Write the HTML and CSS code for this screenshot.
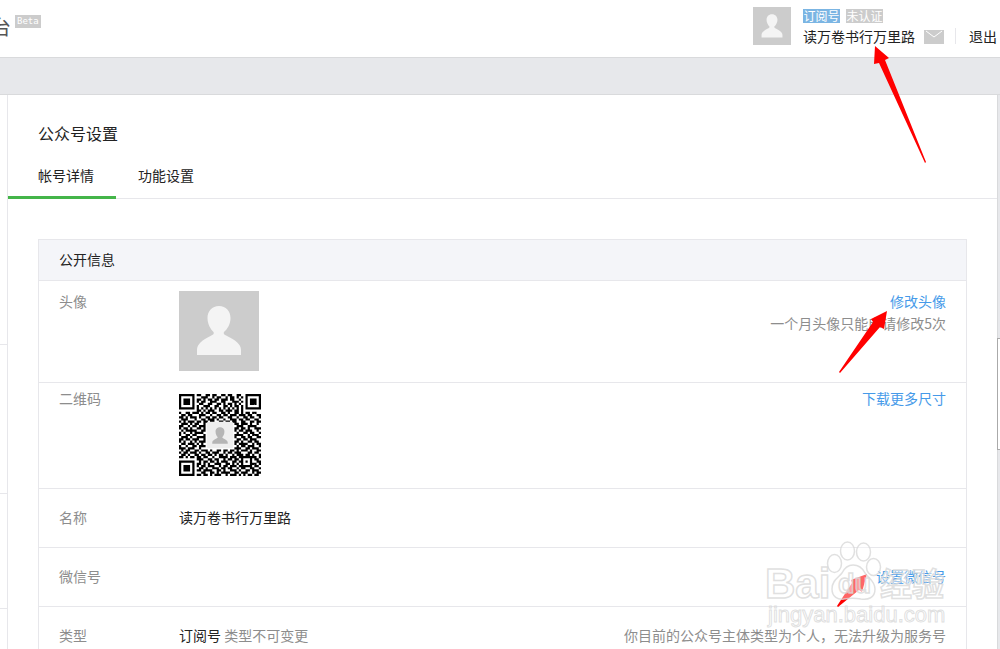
FILE: index.html
```html
<!DOCTYPE html>
<html lang="zh-CN">
<head>
<meta charset="utf-8">
<title>公众号设置</title>
<link rel="stylesheet" href="styles.css">
</head>
<body>
<svg class="defs" width="0" height="0" aria-hidden="true">
  <symbol id="person" viewBox="0 0 80 80">
    <rect width="80" height="80" fill="#ccc"/>
    <path fill="#f4f4f4" d="M40 15c-7 0-11.500 5-11.500 12 0 6 3 11 6 14 1 2-1 3-3 4-8 4-13.500 8-13.500 14v5h44v-5c0-6-6-10-14-14-2-1-4-2-3-4 3.500-3 6.500-8 6.500-14 0-7-4.500-12-11.500-12z"/>
  </symbol>
</svg>
<div class="page">
  <header class="topbar">
    <div class="brand"><span class="brand-name">台</span><span class="beta">Beta</span></div>
    <div class="account">
      <svg class="account-avatar" role="img" aria-label="头像"><use href="#person"/></svg>
      <div class="account-info">
        <div class="badges"><span class="badge badge-blue">订阅号</span><span class="badge">未认证</span></div>
        <div class="account-line">
          <a class="plain" href="#">读万卷书行万里路</a>
          <a class="mail" href="#" aria-label="消息"><svg viewBox="0 0 20 14"><rect width="20" height="14" fill="#ccc"/><path d="M2 1l8 6 8-6" fill="none" stroke="#fff" stroke-width="1"/></svg></a>
          <a class="plain logout" href="#">退出</a>
        </div>
      </div>
    </div>
  </header>
  <div class="band"></div>
  <div class="body">
    <nav class="side" aria-label="菜单"><div class="side-a"></div><div class="side-b"></div><div class="side-c"></div></nav>
    <main class="main">
      <h1 class="title">公众号设置</h1>
      <nav class="tabs"><a class="tab tab-active" href="#">帐号详情</a><a class="tab" href="#">功能设置</a></nav>
      <section class="panel">
        <h2 class="panel-title">公开信息</h2>
        <div class="row row-avatar">
          <div class="label">头像</div>
          <div class="value"><svg class="avatar" role="img" aria-label="头像"><use href="#person"/></svg></div>
          <div class="action"><a href="#">修改头像</a><p>一个月头像只能申请修改5次</p></div>
        </div>
        <div class="row row-qr">
          <div class="label">二维码</div>
          <div class="value"><svg class="qr" viewBox="0 0 37 37" role="img" aria-label="二维码"><path id="modules"/><rect x="12.500" y="12.500" width="12" height="12" rx="1" fill="#eee"/><path fill="#b5b5b5" d="M18.500 15c-1.500 0-2 1-2 2 0 1.200.5 2 1 2.500-.5 1-2.500 1-2.500 2.500v.5h7V22c0-1.500-2-1.500-2.500-2.500.5-.5 1-1.300 1-2.500 0-1-.5-2-2-2z"/></svg></div>
          <div class="action"><a href="#">下载更多尺寸</a></div>
        </div>
        <div class="row">
          <div class="label">名称</div>
          <div class="value">读万卷书行万里路</div>
        </div>
        <div class="row">
          <div class="label">微信号</div>
          <div class="value"></div>
          <div class="action"><a href="#">设置微信号</a></div>
        </div>
        <div class="row">
          <div class="label">类型</div>
          <div class="value">订阅号 <span class="muted">类型不可变更</span></div>
          <div class="action">你目前的公众号主体类型为个人，无法升级为服务号</div>
        </div>
      </section>
    </main>
  </div>
  <div class="floater"></div>
  <svg class="marks" viewBox="740 0 260 649" aria-hidden="true">
    <g fill="#f00">
      <path d="M875 46L889 58L885 60L926 162L925 163L879 63L874 64Z"/>
      <path d="M887 311L884 329L880 327L840 373L839 372L873 322L871 319Z"/>
      <path d="M867 574L862 592L859 590L838 607L837 606L852 583L851 580Z"/>
    </g>
    <g class="watermark">
      <ellipse cx="834.500" cy="563.500" rx="7" ry="9"/><ellipse cx="847.500" cy="551" rx="7" ry="9"/>
      <ellipse cx="863.500" cy="552" rx="7" ry="9"/><ellipse cx="873.500" cy="567" rx="7" ry="8.500"/>
      <path d="M853 565c-6 0-9 4-11 8-3 4-10 7-10 16 0 8 6 11 12 10 6-1 11-1 17 0 7 1 14-1 14-10 0-8-7-11-10-16-2-4-5-8-12-8z"/>
      <text class="wm-bai" x="765" y="598">Bai</text>
      <text class="wm-du" x="838" y="593">du</text>
      <text class="wm-cn" x="880" y="596">经验</text>
      <text class="wm-url" x="768" y="622">jingyan.baidu.com</text>
    </g>
  </svg>
</div>
<script src="qr.js"></script>
</body>
</html>
```
FILE: qr.js
```js
const rows = [
  "1111111011001101100110110011001111111",
  "1000001000111001011001011010101000001",
  "1011101011010110110111011001001011101",
  "1011101010110011100110001110101011101",
  "1011101001100110011010110101001011101",
  "1000001010011100110011010110101000001",
  "1111111010101010101010101010101111111",
  "0000000011010111001101110110100000000",
  "1001101110101101100110100110101101100",
  "0110110001110010011011011101110110011",
  "1101011101001101101100110010011011001",
  "0111000100110111010010011101101100110",
  "1010111011011011001101101100110011011",
  "0111010110010000000000000110111010010",
  "1100101101110000000000000011100111100",
  "1011010011010000000000000110110100111",
  "0101111100110000000000000101101110010",
  "1010010111100000000000000010011011001",
  "1001101100010000000000000111100101110",
  "0111010011110000000000000100110110011",
  "1101101110010000000000000011011011100",
  "1010010101110000000000000110100110110",
  "0110111010100000000000000101111001011",
  "1001001101110000000000000010110111001",
  "1110111001000000000000000111001101110",
  "0101100110111010011011011010111010011",
  "1011011101001101110010110111000110110",
  "0110100110110110101101001011101101001",
  "1101011011011001001111011101111111101",
  "0000000011100110110010110110100010110",
  "1111111001011011010111001101101010011",
  "1000001011010100111001101010100011101",
  "1011101010110111001011011101111110110",
  "1011101001101001110110110010110011001",
  "1011101011011110011010011101001101110",
  "1000001000110011010111100110111001011",
  "1111111011011010111001011101010110110"
];

const path = rows.flatMap((row, y) =>
  [...row].map((cell, x) => cell === "1" ? `M${x} ${y}h1v1h-1z` : "")
).join("");
document.getElementById("modules").setAttribute("d", path);
```
FILE: styles.css
```css
* { box-sizing: border-box; }
body {
  margin: 0;
  background: #fff;
  color: #222;
  font: 14px/20px "Noto Sans CJK SC", sans-serif;
}
h1, h2, p { margin: 0; font-weight: inherit; }
a { color: #459ae9; text-decoration: none; }
.defs { position: absolute; }
.page {
  position: relative;
  display: flex;
  flex-direction: column;
  height: 100vh;
  overflow: hidden;
}

.topbar {
  display: flex;
  flex: none;
  justify-content: space-between;
  height: 58px;
  border-bottom: 1px solid #d9dadc;
}
.brand { display: flex; align-items: flex-start; gap: 4px; margin-left: -9px; padding-top: 15px; }
.brand-name { font-size: 20px; line-height: 24px; color: #555; }
.beta {
  padding: 0 2px;
  background: #ccc;
  color: #fff;
  font: 9px/13px "DejaVu Sans Mono", monospace;
}
.account { display: flex; gap: 12px; padding: 7px 3px 0 0; }
.account-avatar { width: 38px; height: 38px; }
.badges { display: flex; gap: 6px; padding-top: 2px; }
.badge {
  width: 37px;
  background: #ccc;
  color: #fff;
  font-size: 12px;
  line-height: 14px;
  text-align: center;
}
.badge-blue { background: #7bb5e3; }
.account-line { display: flex; align-items: center; height: 25px; }
.plain { color: #222; }
.mail { display: flex; width: 20px; height: 14px; margin: 2px 11px 0 9px; }
.logout { padding-left: 13px; border-left: 1px solid #e7e7eb; line-height: 16px; }

.band { flex: none; height: 37px; background: #e7e8eb; border-bottom: 1px solid #d9dadc; }
.body { display: flex; flex: 1; min-height: 0; padding-right: 2px; background: #e7e8eb; }
.side { width: 7px; background: #fff; }
.side div { border-bottom: 1px solid #e7e7eb; }
.side-a { height: 250px; }
.side-b { height: 149px; }
.side-c { height: 115px; }
.main {
  flex: 1;
  padding-top: 27px;
  background: #fff;
  border: solid #d9dadc;
  border-width: 0 1px;
  border-left-color: #e7e7eb;
}
.title { margin: 0 30px 10px; font-size: 16px; line-height: 22px; }
.tabs { display: flex; height: 45px; border-bottom: 1px solid #e7e7eb; }
.tab { height: 45px; padding: 2px 22px 0; line-height: 38px; color: #222; }
.tab-active { padding-left: 30px; border-bottom: 3px solid #44b549; }

.panel { margin: 40px 30px 0; border: 1px solid #e7e7eb; }
.panel-title { padding: 0 20px 2px; background: #f4f5f9; font-size: 14px; line-height: 38px; }
.row { display: flex; padding: 18px 20px 20px; border-top: 1px solid #e7e7eb; }
.label { width: 120px; color: #8d8d8d; }
.value { flex: 1; }
.action { color: #8d8d8d; text-align: right; }
.action p { margin-top: 2px; }
.muted { color: #8d8d8d; }
.row-avatar { padding-top: 10px; padding-bottom: 11px; }
.avatar { display: block; width: 80px; height: 80px; }
.row-qr { padding-top: 5px; padding-bottom: 12px; }
.qr { display: block; width: 82px; height: 82px; margin-top: 6px; }

.floater {
  position: absolute;
  top: 338px;
  right: 0;
  width: 3px;
  height: 112px;
  background: #fff;
  border: 1px solid #aaa;
  border-right: 0;
}
.marks { position: absolute; top: 0; right: 0; width: 260px; height: 649px; pointer-events: none; }
.watermark {
  fill: #fff;
  fill-opacity: 0.4;
  stroke: #d8d8d8;
  stroke-opacity: 0.8;
  stroke-width: 1.5;
  font-family: "Liberation Sans", sans-serif;
}
.wm-bai { font-size: 42px; font-weight: 700; }
.wm-du { font-size: 27px; font-weight: 700; }
.wm-cn { font: 700 32px "Noto Sans CJK SC", sans-serif; }
.wm-url { font-size: 22px; stroke-width: 1; }
```
